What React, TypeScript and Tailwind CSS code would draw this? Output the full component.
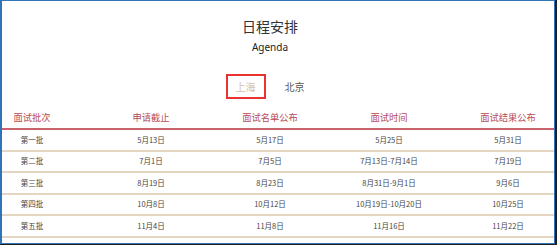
import React from "react";

const rows = [
  ["第一批", "5月13日", "5月17日", "5月25日", "5月31日"],
  ["第二批", "7月1日", "7月5日", "7月13日-7月14日", "7月19日"],
  ["第三批", "8月19日", "8月23日", "8月31日-9月1日", "9月6日"],
  ["第四批", "10月8日", "10月12日", "10月19日-10月20日", "10月25日"],
  ["第五批", "11月4日", "11月8日", "11月16日", "11月22日"],
];

const headers = ["面试批次", "申请截止", "面试名单公布", "面试时间", "面试结果公布"];

export default function App() {
  return (
    <div
      className="w-[557px] h-[245px] bg-[#1e1e1e] overflow-hidden"
      style={{ fontFamily: '"Noto Sans CJK SC", "Noto Sans", sans-serif' }}
    >
      <div className="w-[555px] h-[244px] bg-white border-l-2 border-t border-r border-b border-[#2f74b8] overflow-hidden">
        <div className="w-[536px] flex flex-col items-center">
          <div className="mt-[15px] leading-[20px] text-[14px] text-[#333]">日程安排</div>
          <div
            className="mt-[4px] leading-[14px] text-[10px] text-[#222]"
            style={{ fontFamily: '"Noto Sans", "Noto Sans CJK SC", sans-serif' }}
          >
            Agenda
          </div>
          <div className="mt-[20px] flex gap-[9px]">
            <div className="w-[40px] h-[25px] border-2 border-[#e8332e] flex items-center justify-center text-[10px] text-[#d6c1a5]">
              上海
            </div>
            <div className="w-[40px] h-[25px] flex items-center justify-center text-[10px] text-[#555]">
              北京
            </div>
          </div>
        </div>
        <div className="mt-[7px] h-[24px] border-b-2 border-[#c9636b] grid grid-cols-[repeat(5,60px)] gap-x-[59px] items-center">
          {headers.map((h) => (
            <div key={h} className="flex justify-center whitespace-nowrap text-[9.25px] leading-[22px] text-[#b94a55]">
              {h}
            </div>
          ))}
        </div>
        {rows.map((r, i) => (
          <div
            key={i}
            className="h-[21.5px] border-b-2 border-[#e4d6c1] grid grid-cols-[repeat(5,60px)] gap-x-[59px] items-center"
          >
            {r.map((c, j) => (
              <div key={j} className="flex justify-center whitespace-nowrap text-[7.5px] leading-[12px] text-[#444]">
                {c}
              </div>
            ))}
          </div>
        ))}
      </div>
    </div>
  );
}
